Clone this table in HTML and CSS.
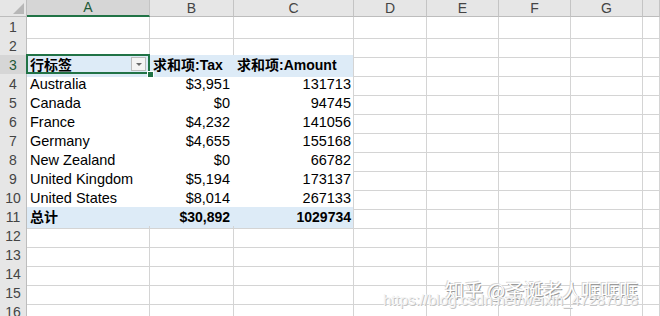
FILE: index.html
```html
<!DOCTYPE html>
<html>
<head>
<meta charset="utf-8">
<link rel="stylesheet" href="styles.css">
</head>
<body>
<div class="sheet">
  <div class="row hdr">
    <div class="corner"><span class="tri"></span></div>
    <div class="ch ch-sel">A</div><div class="ch">B</div><div class="ch">C</div><div class="ch">D</div><div class="ch">E</div><div class="ch">F</div><div class="ch">G</div><div class="ch"></div>
  </div>
  <div class="row"><div class="rh">1</div><div class="c"></div><div class="c"></div><div class="c"></div><div class="c"></div><div class="c"></div><div class="c"></div><div class="c"></div><div class="c"></div></div>
  <div class="row"><div class="rh">2</div><div class="c"></div><div class="c"></div><div class="c"></div><div class="c"></div><div class="c"></div><div class="c"></div><div class="c"></div><div class="c"></div></div>
  <div class="row"><div class="rh rh-sel">3</div>
    <div class="c pv ph in sel-cell">行标签<span class="dd"><span class="ddtri"></span></span><span class="selbox"></span><span class="handle"></span></div>
    <div class="c pv ph in">求和项:Tax</div>
    <div class="c pv ph last">求和项:Amount</div>
    <div class="c"></div><div class="c"></div><div class="c"></div><div class="c"></div><div class="c"></div></div>
  <div class="row"><div class="rh">4</div><div class="c pv in">Australia</div><div class="c pv in num">$3,951</div><div class="c pv last num">131713</div><div class="c"></div><div class="c"></div><div class="c"></div><div class="c"></div><div class="c"></div></div>
  <div class="row"><div class="rh">5</div><div class="c pv in">Canada</div><div class="c pv in num">$0</div><div class="c pv last num">94745</div><div class="c"></div><div class="c"></div><div class="c"></div><div class="c"></div><div class="c"></div></div>
  <div class="row"><div class="rh">6</div><div class="c pv in">France</div><div class="c pv in num">$4,232</div><div class="c pv last num">141056</div><div class="c"></div><div class="c"></div><div class="c"></div><div class="c"></div><div class="c"></div></div>
  <div class="row"><div class="rh">7</div><div class="c pv in">Germany</div><div class="c pv in num">$4,655</div><div class="c pv last num">155168</div><div class="c"></div><div class="c"></div><div class="c"></div><div class="c"></div><div class="c"></div></div>
  <div class="row"><div class="rh">8</div><div class="c pv in">New Zealand</div><div class="c pv in num">$0</div><div class="c pv last num">66782</div><div class="c"></div><div class="c"></div><div class="c"></div><div class="c"></div><div class="c"></div></div>
  <div class="row"><div class="rh">9</div><div class="c pv in">United Kingdom</div><div class="c pv in num">$5,194</div><div class="c pv last num">173137</div><div class="c"></div><div class="c"></div><div class="c"></div><div class="c"></div><div class="c"></div></div>
  <div class="row"><div class="rh">10</div><div class="c pv in pre">United States</div><div class="c pv in num pre">$8,014</div><div class="c pv last num pre">267133</div><div class="c"></div><div class="c"></div><div class="c"></div><div class="c"></div><div class="c"></div></div>
  <div class="row"><div class="rh">11</div><div class="c pt in">总计</div><div class="c pt in num">$30,892</div><div class="c pt last num">1029734</div><div class="c"></div><div class="c"></div><div class="c"></div><div class="c"></div><div class="c"></div></div>
  <div class="row"><div class="rh">12</div><div class="c"></div><div class="c"></div><div class="c"></div><div class="c"></div><div class="c"></div><div class="c"></div><div class="c"></div><div class="c"></div></div>
  <div class="row"><div class="rh">13</div><div class="c"></div><div class="c"></div><div class="c"></div><div class="c"></div><div class="c"></div><div class="c"></div><div class="c"></div><div class="c"></div></div>
  <div class="row"><div class="rh">14</div><div class="c"></div><div class="c"></div><div class="c"></div><div class="c"></div><div class="c"></div><div class="c"></div><div class="c"></div><div class="c"></div></div>
  <div class="row"><div class="rh">15</div><div class="c"></div><div class="c"></div><div class="c"></div><div class="c"></div><div class="c"></div><div class="c"></div><div class="c"></div><div class="c"></div></div>
  <div class="row"><div class="rh">16</div><div class="c"></div><div class="c"></div><div class="c"></div><div class="c"></div><div class="c"></div><div class="c"></div><div class="c"></div><div class="c"></div></div>

  <div class="wm">
    <div class="wm-zh">知乎 @圣诞老人哐哐哐</div>
    <div class="wm-url">https://blog.csdn.net/weixin_47287018</div>
  </div>
</div>
</body>
</html>
```

FILE: styles.css
```css
html, body {
  margin: 0;
  padding: 0;
  background: #ffffff;
  overflow: hidden;
}

.sheet {
  position: relative;
  width: 660px;
  height: 316px;
  overflow: hidden;
  font-family: "Liberation Sans", "Noto Sans CJK SC", sans-serif;
  font-size: 14px;
  color: #000;
}

.row {
  display: grid;
  grid-template-columns: 27px 123px 84px 120px 73px 72px 72px 72px 1fr;
  height: 19px;
}

.row.hdr {
  height: 17px;
}

.row > div {
  box-sizing: border-box;
  border-right: 1px solid #d4d4d4;
  border-bottom: 1px solid #d4d4d4;
}

.corner {
  position: relative;
  background: #e6e6e6;
  border-right: 1px solid #bdbdbd !important;
  border-bottom: 1px solid #bdbdbd !important;
}

.tri {
  position: absolute;
  right: 2px;
  bottom: 2px;
  width: 0;
  height: 0;
  border-left: 11px solid transparent;
  border-bottom: 11px solid #b7b7b7;
}

.ch {
  background: #e6e6e6;
  border-right: 1px solid #c4c4c4 !important;
  border-bottom: 1px solid #bdbdbd !important;
  color: #444;
  font-size: 14px;
  line-height: 16px;
  text-align: center;
}

.ch-sel {
  background: #d6d6d6;
  color: #1e5a37;
  border-bottom: 2px solid #217346 !important;
  line-height: 15px;
}

.rh {
  background: #e6e6e6;
  border-right: 1px solid #bdbdbd !important;
  border-bottom: 1px solid #d4d4d4 !important;
  color: #444;
  font-size: 14px;
  line-height: 21px;
  text-align: center;
}

.rh-sel {
  background: #d6d6d6;
  color: #1e5a37;
}

.c {
  font-size: 14.5px;
  line-height: 21px;
  white-space: nowrap;
  overflow: visible;
}

.pv, .pt {
  padding: 0 3px;
}

.pv.in, .pt.in {
  border-right: 1px solid transparent !important;
}

.pv {
  border-bottom: 1px solid #ffffff !important;
}

.pv.last, .pt.last {
  padding-right: 2px;
}

.ph {
  background: #ddebf7;
  font-weight: bold;
  font-size: 14px;
  border-bottom: 1px solid #ddebf7 !important;
}

.pv.pre {
  border-bottom: 1px solid #9bc2e6 !important;
}

.pt {
  background: #ddebf7;
  font-weight: bold;
  font-size: 14px;
  line-height: 20px;
  border-bottom: 1px solid #d4d4d4 !important;
}

.num {
  text-align: right;
}

.sel-cell {
  position: relative;
}

.dd {
  position: absolute;
  left: 104px;
  top: 2px;
  width: 15px;
  height: 14px;
  box-sizing: border-box;
  background: #f4f4f4;
  border: 1px solid #bcbcbc;
}

.ddtri {
  position: absolute;
  left: 4px;
  top: 5px;
  width: 0;
  height: 0;
  border-left: 3px solid transparent;
  border-right: 3px solid transparent;
  border-top: 3px solid #6a6a6a;
}

.selbox {
  position: absolute;
  left: -1px;
  top: -1px;
  width: 124px;
  height: 20px;
  box-sizing: border-box;
  border: 2px solid #217346;
}

.handle {
  position: absolute;
  left: 120px;
  top: 16px;
  width: 5px;
  height: 5px;
  background: #217346;
  border: 1px solid #ffffff;
}

.wm {
  position: absolute;
  left: 383px;
  top: 279px;
  width: 290px;
  pointer-events: none;
}

.wm-zh {
  margin-left: 62px;
  font-family: "Noto Sans CJK SC", sans-serif;
  font-size: 19px;
  line-height: 22px;
  letter-spacing: 0px;
  color: #ffffff;
  text-shadow: 1px 1px 0 #9a9a9a, -1px -1px 0 #d8d8d8;
}

.wm-url {
  margin-top: -9px;
  font-family: "Liberation Sans", sans-serif;
  font-size: 15px;
  line-height: 16px;
  color: #f4f4f4;
  text-shadow: 1px 1px 0 #c4c4c4;
}
```
